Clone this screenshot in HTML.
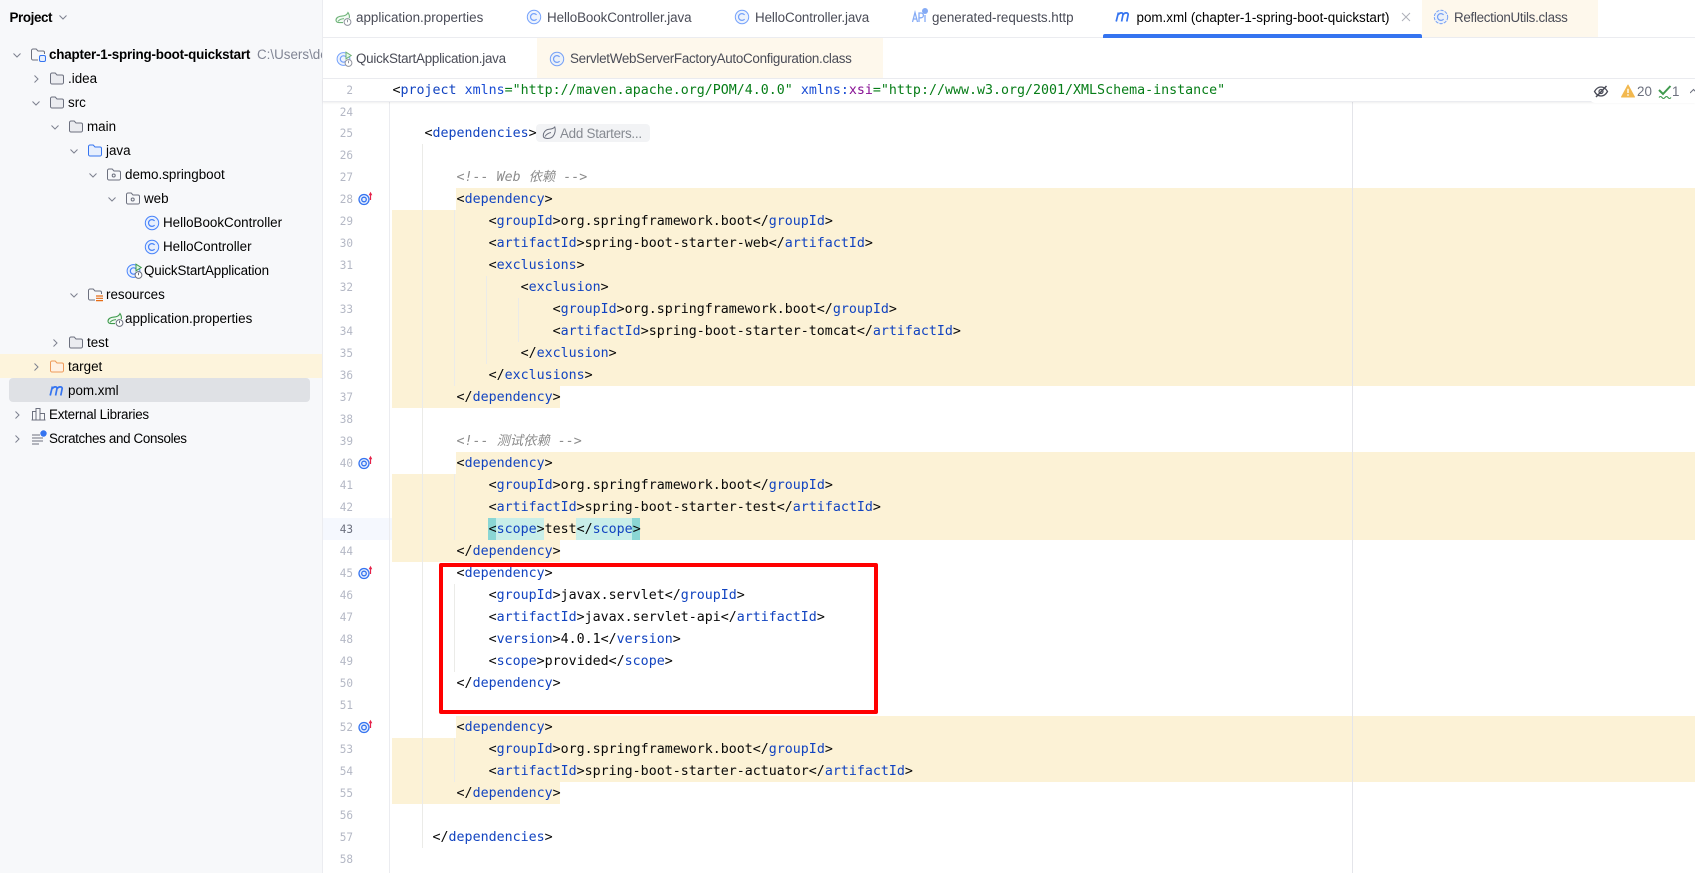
<!DOCTYPE html>
<html lang="en"><head><meta charset="utf-8"><title>pom.xml</title>
<style>
html,body{margin:0;padding:0;background:#fff}
#p{position:relative;width:1695px;height:873px;overflow:hidden;background:#fff;font-family:"Liberation Sans","Noto Sans CJK SC",sans-serif;font-size:13.4px;color:#000}
#p div,#p svg{position:absolute}
#side{left:0;top:0;width:322px;height:873px;background:#f7f8fa;overflow:hidden}
.t{height:24px;line-height:24px;white-space:nowrap;color:#000}
.i16{width:16px;height:16px;overflow:visible}
.c{width:12px;height:12px}
.tb{height:36px;line-height:36px;white-space:nowrap;color:#4a4c57}
.l{left:392.5px;margin-top:1px;height:22px;line-height:22px;white-space:pre;font-family:"DejaVu Sans Mono","Noto Sans CJK SC",monospace;font-size:13.3px;color:#080808;z-index:5}
.l u{text-decoration:none;color:#1143c0}
.l em{color:#8c8c8c;font-style:italic}
.n{left:323px;margin-top:1px;width:30px;text-align:right;height:22px;line-height:22px;font-family:"DejaVu Sans Mono",monospace;font-size:11.05px;color:#b4b8c5;z-index:3}
.y{background:#fcf2d6;z-index:1}
.g{width:1px;background:#ebebe8;z-index:2}
.h{height:22px;z-index:3}
</style></head><body>
<svg width="0" height="0" style="position:absolute">
<defs>
<symbol id="cd" viewBox="0 0 12 12"><path d="M2.5 4.5 6 8 9.5 4.5" fill="none" stroke="#7d818e" stroke-width="1"/></symbol>
<symbol id="cr" viewBox="0 0 12 12"><path d="M4.5 2.5 8 6 4.5 9.5" fill="none" stroke="#7d818e" stroke-width="1"/></symbol>
<symbol id="f" viewBox="0 0 16 16"><path d="M1.5 4.5A1.5 1.5 0 0 1 3 3h3.2l1.8 2h5a1.5 1.5 0 0 1 1.5 1.5v6A1.5 1.5 0 0 1 13 14H3a1.5 1.5 0 0 1-1.5-1.5z" fill="#ebecf0" stroke="#6c707e"/></symbol>
<symbol id="fb" viewBox="0 0 16 16"><path d="M1.5 4.5A1.5 1.5 0 0 1 3 3h3.2l1.8 2h5a1.5 1.5 0 0 1 1.5 1.5v6A1.5 1.5 0 0 1 13 14H3a1.5 1.5 0 0 1-1.5-1.5z" fill="#e7effd" stroke="#3574f0"/></symbol>
<symbol id="fo" viewBox="0 0 16 16"><path d="M1.5 4.5A1.5 1.5 0 0 1 3 3h3.2l1.8 2h5a1.5 1.5 0 0 1 1.5 1.5v6A1.5 1.5 0 0 1 13 14H3a1.5 1.5 0 0 1-1.5-1.5z" fill="#fff1e3" stroke="#ee9a5a"/></symbol>
<symbol id="fp" viewBox="0 0 16 16"><path d="M1.5 4.5A1.5 1.5 0 0 1 3 3h3.2l1.8 2h5a1.5 1.5 0 0 1 1.5 1.5v6A1.5 1.5 0 0 1 13 14H3a1.5 1.5 0 0 1-1.5-1.5z" fill="#f7f8fa" stroke="#6c707e"/><circle cx="7.7" cy="9.5" r="1.5" fill="none" stroke="#6c707e"/></symbol>
<symbol id="fr" viewBox="0 0 16 16"><path d="M8 14H3a1.5 1.5 0 0 1-1.5-1.5v-8A1.5 1.5 0 0 1 3 3h3.2l1.8 2h5a1.5 1.5 0 0 1 1.5 1.5V8" fill="none" stroke="#6c707e"/><rect x="9.5" y="9.5" width="6" height="6" rx="1.5" fill="#e7effd" stroke="#3574f0"/></symbol>
<symbol id="fs" viewBox="0 0 16 16"><path d="M8 14H3a1.5 1.5 0 0 1-1.5-1.5v-8A1.5 1.5 0 0 1 3 3h3.2l1.8 2h5a1.5 1.5 0 0 1 1.5 1.5V8" fill="none" stroke="#6c707e"/><path d="M9 10h7M9 12.3h7M9 14.6h7" stroke="#e66d17" stroke-width="1.2"/></symbol>
<symbol id="k" viewBox="0 0 16 16"><circle cx="8" cy="8" r="6.7" fill="#e7effd" stroke="#4682fa"/><path d="M10.6 5.9A3.4 3.4 0 1 0 10.6 10.1" fill="none" stroke="#4682fa" stroke-width="1.2"/></symbol>
<symbol id="kd" viewBox="0 0 16 16"><circle cx="8" cy="8" r="6.7" fill="#e7effd" stroke="#4682fa" stroke-dasharray="3.2 1.2"/><path d="M10.6 5.9A3.4 3.4 0 1 0 10.6 10.1" fill="none" stroke="#4682fa" stroke-width="1.2"/></symbol>
<symbol id="m" viewBox="0 0 16 16"><path d="M1.2 13.500 3.400 4.500M3.200 6.800C4.400 4.600 7.800 4 8 6.400L6.600 13.500M8 6.800C9.200 4.600 12.800 4 13.200 6.400L11.800 13.500" fill="none" stroke="#3574f0" stroke-width="1.700"/></symbol>
<symbol id="sp" viewBox="0 0 17 16"><path d="M8 12.6H4C1.8 12.6.9 11.2 1 10 1.200 7.500 4 6.200 7 6.100 9.500 6 12 5 13 2.600 14.400 4.600 14.600 6.600 14.300 8" fill="#eefaf0" stroke="#3f9a4d" stroke-width="1.1"/><path d="M3 11.400C4.500 9.200 6.500 8.800 9 8.600" fill="none" stroke="#3f9a4d"/><circle cx="12.500" cy="12" r="3.400" fill="#fff" stroke="#6c707e"/><path d="M12.500 9.800v2.400" stroke="#6c707e"/></symbol>
<symbol id="qs" viewBox="0 0 17 16"><circle cx="7.500" cy="8" r="6.400" fill="#e7effd" stroke="#4682fa"/><path d="M10 6A3.200 3.200 0 1 0 10 10" fill="none" stroke="#4682fa" stroke-width="1.200"/><path d="M10 1.200 15.200 4.500 10 7.800z" fill="#dff5e3" stroke="#3f9a4d"/><circle cx="12.500" cy="12" r="3.400" fill="#fff" stroke="#6c707e"/><path d="M12.500 9.800v2.400" stroke="#6c707e"/></symbol>
<symbol id="lib" viewBox="0 0 16 16"><path d="M1.500 14V5.500h3.500V14M5 14V2.500h4V14M9 14V7.500h4.500V14M.5 14h14" fill="none" stroke="#6c707e"/></symbol>
<symbol id="sc" viewBox="0 0 16 16"><path d="M1 5h8M1 8h11M1 11h11M1 14h7" stroke="#6c707e" fill="none"/><circle cx="12.500" cy="3.500" r="3.200" fill="#3574f0"/></symbol>
<symbol id="api" viewBox="0 0 16 16"><path d="M.5 14 3 4.500l2.500 9.500M1.400 11h3.200M7 14V5h2a2.300 2.300 0 0 1 0 4.800H7M13 7V14" fill="none" stroke="#3574f0" stroke-width="1.300"/><circle cx="13" cy="3" r="3" fill="#3574f0"/></symbol>
<symbol id="tg" viewBox="0 0 20 16"><circle cx="7" cy="8.500" r="5" fill="#e7effd" stroke="#3574f0" stroke-width="1.300"/><circle cx="7" cy="8.500" r="2.300" fill="none" stroke="#3574f0" stroke-width="1.300"/><path d="M13.500 9V3" fill="none" stroke="#e5234a" stroke-width="1.200"/><path d="M11.700 4.200 13.500 .8 15.300 4.200z" fill="#e5234a"/></symbol>
</defs></svg>
<div id="p">

<div id="side">
<div class="t" style="left:9.500px;top:6px;font-weight:bold;letter-spacing:-.4px">Project</div>
<svg class="c" style="left:57px;top:11px"><use href="#cd"/></svg>

<div style="left:0;top:354px;width:322px;height:24px;background:#fdf4dc"></div>
<div style="left:9px;top:378px;width:301px;height:24px;border-radius:4px;background:#dfe1e5"></div>

<svg class="c" style="left:11px;top:49px"><use href="#cd"/></svg>
<svg class="i16" style="left:30px;top:46px"><use href="#fr"/></svg>
<div class="t" style="left:49px;top:43px;font-weight:bold;letter-spacing:-.2px">chapter-1-spring-boot-quickstart</div>
<div class="t" style="left:257px;top:43px;color:#818594">C:\Users\de</div>

<svg class="c" style="left:30px;top:73px"><use href="#cr"/></svg>
<svg class="i16" style="left:49px;top:70px"><use href="#f"/></svg>
<div class="t" style="left:68px;top:67px">.idea</div>

<svg class="c" style="left:30px;top:97px"><use href="#cd"/></svg>
<svg class="i16" style="left:49px;top:94px"><use href="#f"/></svg>
<div class="t" style="left:68px;top:91px">src</div>

<svg class="c" style="left:49px;top:121px"><use href="#cd"/></svg>
<svg class="i16" style="left:68px;top:118px"><use href="#f"/></svg>
<div class="t" style="left:87px;top:115px">main</div>

<svg class="c" style="left:68px;top:145px"><use href="#cd"/></svg>
<svg class="i16" style="left:87px;top:142px"><use href="#fb"/></svg>
<div class="t" style="left:106px;top:139px">java</div>

<svg class="c" style="left:87px;top:169px"><use href="#cd"/></svg>
<svg class="i16" style="left:106px;top:166px"><use href="#fp"/></svg>
<div class="t" style="left:125px;top:163px">demo.springboot</div>

<svg class="c" style="left:106px;top:193px"><use href="#cd"/></svg>
<svg class="i16" style="left:125px;top:190px"><use href="#fp"/></svg>
<div class="t" style="left:144px;top:187px">web</div>

<svg class="i16" style="left:144px;top:215px"><use href="#k"/></svg>
<div class="t" style="left:163px;top:211px">HelloBookController</div>

<svg class="i16" style="left:144px;top:239px"><use href="#k"/></svg>
<div class="t" style="left:163px;top:235px">HelloController</div>

<svg class="i16" style="left:126px;top:263px;width:17px"><use href="#qs"/></svg>
<div class="t" style="left:144px;top:259px;letter-spacing:-.15px">QuickStartApplication</div>

<svg class="c" style="left:68px;top:289px"><use href="#cd"/></svg>
<svg class="i16" style="left:87px;top:286px"><use href="#fs"/></svg>
<div class="t" style="left:106px;top:283px">resources</div>

<svg class="i16" style="left:107px;top:311px;width:17px"><use href="#sp"/></svg>
<div class="t" style="left:125px;top:307px">application.properties</div>

<svg class="c" style="left:49px;top:337px"><use href="#cr"/></svg>
<svg class="i16" style="left:68px;top:334px"><use href="#f"/></svg>
<div class="t" style="left:87px;top:331px">test</div>

<svg class="c" style="left:30px;top:361px"><use href="#cr"/></svg>
<svg class="i16" style="left:49px;top:358px"><use href="#fo"/></svg>
<div class="t" style="left:68px;top:355px">target</div>

<svg class="i16" style="left:49px;top:382px"><use href="#m"/></svg>
<div class="t" style="left:68px;top:379px">pom.xml</div>

<svg class="c" style="left:11px;top:409px"><use href="#cr"/></svg>
<svg class="i16" style="left:31px;top:406px"><use href="#lib"/></svg>
<div class="t" style="left:49px;top:403px;letter-spacing:-.24px">External Libraries</div>

<svg class="c" style="left:11px;top:433px"><use href="#cr"/></svg>
<svg class="i16" style="left:31px;top:430px"><use href="#sc"/></svg>
<div class="t" style="left:49px;top:427px;letter-spacing:-.34px">Scratches and Consoles</div>
</div>
<div style="left:322px;top:0;width:1px;height:873px;background:#ebecf0"></div>

<!-- tabs -->
<div style="left:1422px;top:0;width:176px;height:37px;background:#fef8ec"></div>
<div style="left:537px;top:38px;width:346px;height:40px;background:#fef8ec"></div>
<div style="left:323px;top:37px;width:1372px;height:1px;background:#ebecf0"></div>
<div style="left:323px;top:78px;width:1372px;height:1px;background:#ebecf0"></div>
<div style="left:1103px;top:34px;width:319px;height:3.500px;background:#3574f0;border-radius:2px 2px 0 0;z-index:2"></div>

<svg class="i16" style="left:335px;top:10px;width:17px;opacity:.75"><use href="#sp"/></svg>
<div class="tb" style="left:356px;top:0">application.properties</div>
<svg class="i16" style="left:526px;top:9px;opacity:.75"><use href="#k"/></svg>
<div class="tb" style="left:547px;top:0;letter-spacing:-.09px">HelloBookController.java</div>
<svg class="i16" style="left:734px;top:9px;opacity:.75"><use href="#k"/></svg>
<div class="tb" style="left:755px;top:0;letter-spacing:-.1px">HelloController.java</div>
<svg class="i16" style="left:912px;top:8px;opacity:.6"><use href="#api"/></svg>
<div class="tb" style="left:932px;top:0;letter-spacing:-.03px">generated-requests.http</div>
<svg class="i16" style="left:1115px;top:8px"><use href="#m"/></svg>
<div class="tb" style="left:1136.500px;top:0;color:#000">pom.xml (chapter-1-spring-boot-quickstart)</div>
<svg style="left:1401px;top:12px;width:10px;height:10px"><path d="M1 1 9 9M9 1 1 9" stroke="#aeb1ba" stroke-width="1"/></svg>
<svg class="i16" style="left:1433px;top:9px;opacity:.75"><use href="#kd"/></svg>
<div class="tb" style="left:1454px;top:0;letter-spacing:-.3px">ReflectionUtils.class</div>
<svg class="i16" style="left:336px;top:51px;width:17px;opacity:.75"><use href="#qs"/></svg>
<div class="tb" style="left:356px;top:41px;letter-spacing:-.25px">QuickStartApplication.java</div>
<svg class="i16" style="left:549px;top:51px;opacity:.75"><use href="#k"/></svg>
<div class="tb" style="left:570px;top:41px;letter-spacing:-.28px">ServletWebServerFactoryAutoConfiguration.class</div>

<!-- editor backgrounds -->
<div style="left:389px;top:101px;width:1px;height:772px;background:#ebecf0;z-index:2"></div>
<div class="h" style="left:323px;top:518px;width:66px;background:#f5f8fe"></div>
<div class="h" style="left:390px;top:518px;width:2px;background:#f5f8fe"></div>

<div class="y" style="left:456px;top:188px;width:1239px;height:22px"></div>
<div class="y" style="left:392px;top:210px;width:1303px;height:176px"></div>
<div class="y" style="left:392px;top:386px;width:168px;height:22px"></div>
<div class="y" style="left:456px;top:452px;width:1239px;height:22px"></div>
<div class="y" style="left:392px;top:474px;width:1303px;height:66px"></div>
<div class="y" style="left:392px;top:540px;width:168px;height:22px"></div>
<div class="y" style="left:456px;top:716px;width:1239px;height:22px"></div>
<div class="y" style="left:392px;top:738px;width:1303px;height:44px"></div>
<div class="y" style="left:392px;top:782px;width:168px;height:22px"></div>

<div style="left:488px;top:518px;width:8px;height:22px;background:#8ad6d4;z-index:2"></div>
<div style="left:496px;top:518px;width:48px;height:22px;background:#c8eee9;z-index:2"></div>
<div style="left:576px;top:518px;width:56px;height:22px;background:#c8eee9;z-index:2"></div>
<div style="left:632px;top:518px;width:8px;height:22px;background:#8ad6d4;z-index:2"></div>

<div style="left:1352px;top:101px;width:1px;height:772px;background:#e4e5ea;z-index:2"></div>
<div class="g" style="left:422px;top:144px;height:704px"></div>
<div class="g" style="left:454px;top:210px;height:176px"></div>
<div class="g" style="left:454px;top:474px;height:66px"></div>
<div class="g" style="left:454px;top:584px;height:88px"></div>
<div class="g" style="left:454px;top:738px;height:44px"></div>
<div class="g" style="left:486px;top:276px;height:88px"></div>
<div class="g" style="left:518px;top:298px;height:44px"></div>

<!-- sticky line -->
<div style="left:323px;top:79px;width:1372px;height:22px;background:#fff;border-bottom:1px solid #ebecf0;box-shadow:0 1px 2px rgba(0,0,0,.07);z-index:6"></div>
<div class="n" style="top:79px;z-index:7">2</div>
<div class="l" style="top:79px;z-index:7">&lt;<u>project</u> <span style="color:#174ad4">xmlns</span><span style="color:#067d17">="http://maven.apache.org/POM/4.0.0"</span> <span style="color:#174ad4">xmlns:</span><span style="color:#871094">xsi</span><span style="color:#067d17">="http://www.w3.org/2001/XMLSchema-instance"</span></div>

<div style="left:1590px;top:79px;width:105px;height:24px;background:#fff;border-radius:0 0 0 5px;z-index:7"></div>
<svg style="left:1593px;top:83px;width:16px;height:16px;z-index:8"><path d="M1.500 8.500C3.500 5 5.500 4 8 4s4.500 1 6.500 4.500C12.500 12 10.500 13 8 13s-4.500-1-6.500-4.500z" fill="none" stroke="#494b57" stroke-width="1.300"/><circle cx="8" cy="8.500" r="2" fill="none" stroke="#494b57" stroke-width="1.200"/><path d="M3 14 13.500 3" stroke="#494b57" stroke-width="1.500"/></svg>
<svg style="left:1621px;top:84px;width:14px;height:14px;z-index:8"><path d="M7 1 13.500 13H.5z" fill="#f2b84f" stroke="#f2b84f" stroke-linejoin="round"/><path d="M7 4.800v4.200M7 10.200v1.500" stroke="#fff" stroke-width="1.400"/></svg>
<div style="left:1637px;top:81px;height:22px;line-height:22px;color:#6c707e;z-index:8">20</div>
<svg style="left:1658px;top:84px;width:14px;height:16px;z-index:8"><path d="M1 6 5 10 12.500 2" fill="none" stroke="#3f9a4d" stroke-width="2"/><path d="M1 13.500q1.500-2 3 0t3 0 3 0 3 0" fill="none" stroke="#3f9a4d" stroke-width="1.100"/></svg>
<div style="left:1672px;top:81px;height:22px;line-height:22px;color:#6c707e;z-index:8">1</div>
<svg style="left:1690px;top:88px;width:5px;height:8px;z-index:8"><path d="M0 5 3.500 1.500 7 5" fill="none" stroke="#6c707e"/></svg>

<!-- line numbers -->
<div class="n" style="top:101px">24</div>
<div class="n" style="top:122px">25</div>
<div class="n" style="top:144px">26</div>
<div class="n" style="top:166px">27</div>
<div class="n" style="top:188px">28</div>
<div class="n" style="top:210px">29</div>
<div class="n" style="top:232px">30</div>
<div class="n" style="top:254px">31</div>
<div class="n" style="top:276px">32</div>
<div class="n" style="top:298px">33</div>
<div class="n" style="top:320px">34</div>
<div class="n" style="top:342px">35</div>
<div class="n" style="top:364px">36</div>
<div class="n" style="top:386px">37</div>
<div class="n" style="top:408px">38</div>
<div class="n" style="top:430px">39</div>
<div class="n" style="top:452px">40</div>
<div class="n" style="top:474px">41</div>
<div class="n" style="top:496px">42</div>
<div class="n" style="top:518px;color:#6c707e">43</div>
<div class="n" style="top:540px">44</div>
<div class="n" style="top:562px">45</div>
<div class="n" style="top:584px">46</div>
<div class="n" style="top:606px">47</div>
<div class="n" style="top:628px">48</div>
<div class="n" style="top:650px">49</div>
<div class="n" style="top:672px">50</div>
<div class="n" style="top:694px">51</div>
<div class="n" style="top:716px">52</div>
<div class="n" style="top:738px">53</div>
<div class="n" style="top:760px">54</div>
<div class="n" style="top:782px">55</div>
<div class="n" style="top:804px">56</div>
<div class="n" style="top:826px">57</div>
<div class="n" style="top:848px">58</div>

<svg style="left:357px;top:191px;width:20px;height:16px;z-index:4"><use href="#tg"/></svg>
<svg style="left:357px;top:455px;width:20px;height:16px;z-index:4"><use href="#tg"/></svg>
<svg style="left:357px;top:565px;width:20px;height:16px;z-index:4"><use href="#tg"/></svg>
<svg style="left:357px;top:719px;width:20px;height:16px;z-index:4"><use href="#tg"/></svg>

<!-- code -->
<div class="l" style="top:122px">    &lt;<u>dependencies</u>&gt;</div>
<div style="left:536px;top:124px;width:114px;height:18px;background:#f2f3f5;border-radius:4px;z-index:4"></div>
<svg style="left:542px;top:126px;width:14px;height:14px;z-index:5"><path d="M1.500 11C.5 7 3.500 3.500 7 3.200 9.500 3 11.500 2.500 12.800 1 14 5 12.500 11.500 7.500 12.300 4.500 12.800 3 12.500 1.500 11zM3 10.500C4.500 8 6.500 7 9 6.500" fill="none" stroke="#6c707e" stroke-width="1"/></svg>
<div style="left:560px;top:123px;height:22px;line-height:22px;color:#868a91;white-space:nowrap;z-index:5;letter-spacing:-.25px">Add Starters...</div>
<div class="l" style="top:166px"><em>        &lt;!-- Web 依赖 --&gt;</em></div>
<div class="l" style="top:188px">        &lt;<u>dependency</u>&gt;</div>
<div class="l" style="top:210px">            &lt;<u>groupId</u>&gt;org.springframework.boot&lt;/<u>groupId</u>&gt;</div>
<div class="l" style="top:232px">            &lt;<u>artifactId</u>&gt;spring-boot-starter-web&lt;/<u>artifactId</u>&gt;</div>
<div class="l" style="top:254px">            &lt;<u>exclusions</u>&gt;</div>
<div class="l" style="top:276px">                &lt;<u>exclusion</u>&gt;</div>
<div class="l" style="top:298px">                    &lt;<u>groupId</u>&gt;org.springframework.boot&lt;/<u>groupId</u>&gt;</div>
<div class="l" style="top:320px">                    &lt;<u>artifactId</u>&gt;spring-boot-starter-tomcat&lt;/<u>artifactId</u>&gt;</div>
<div class="l" style="top:342px">                &lt;/<u>exclusion</u>&gt;</div>
<div class="l" style="top:364px">            &lt;/<u>exclusions</u>&gt;</div>
<div class="l" style="top:386px">        &lt;/<u>dependency</u>&gt;</div>
<div class="l" style="top:430px"><em>        &lt;!-- 测试依赖 --&gt;</em></div>
<div class="l" style="top:452px">        &lt;<u>dependency</u>&gt;</div>
<div class="l" style="top:474px">            &lt;<u>groupId</u>&gt;org.springframework.boot&lt;/<u>groupId</u>&gt;</div>
<div class="l" style="top:496px">            &lt;<u>artifactId</u>&gt;spring-boot-starter-test&lt;/<u>artifactId</u>&gt;</div>
<div class="l" style="top:518px">            &lt;<u>scope</u>&gt;test&lt;/<u>scope</u>&gt;</div>
<div class="l" style="top:540px">        &lt;/<u>dependency</u>&gt;</div>
<div class="l" style="top:562px">        &lt;<u>dependency</u>&gt;</div>
<div class="l" style="top:584px">            &lt;<u>groupId</u>&gt;javax.servlet&lt;/<u>groupId</u>&gt;</div>
<div class="l" style="top:606px">            &lt;<u>artifactId</u>&gt;javax.servlet-api&lt;/<u>artifactId</u>&gt;</div>
<div class="l" style="top:628px">            &lt;<u>version</u>&gt;4.0.1&lt;/<u>version</u>&gt;</div>
<div class="l" style="top:650px">            &lt;<u>scope</u>&gt;provided&lt;/<u>scope</u>&gt;</div>
<div class="l" style="top:672px">        &lt;/<u>dependency</u>&gt;</div>
<div class="l" style="top:716px">        &lt;<u>dependency</u>&gt;</div>
<div class="l" style="top:738px">            &lt;<u>groupId</u>&gt;org.springframework.boot&lt;/<u>groupId</u>&gt;</div>
<div class="l" style="top:760px">            &lt;<u>artifactId</u>&gt;spring-boot-starter-actuator&lt;/<u>artifactId</u>&gt;</div>
<div class="l" style="top:782px">        &lt;/<u>dependency</u>&gt;</div>
<div class="l" style="top:826px">     &lt;/<u>dependencies</u>&gt;</div>

<!-- red box -->
<div style="left:439px;top:563px;width:431px;height:143px;border:4px solid #ff0000;border-radius:2px;z-index:9"></div>

</div>
</body></html>
